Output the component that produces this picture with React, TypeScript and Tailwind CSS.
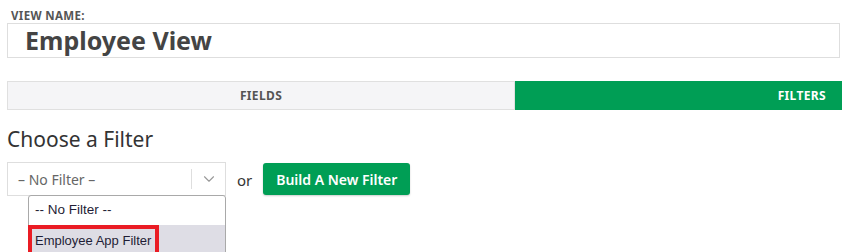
import { ChevronDown } from 'lucide-react';

export default function App() {
  return (
    <div className="w-[842px] h-[252px] overflow-hidden bg-white font-['Noto_Sans',sans-serif] text-[#333]">
      {/* View name */}
      <div className="pl-[11px] pt-[9px] text-[11.5px] font-bold uppercase leading-[14px] tracking-[0.03em] text-[#555]">
        View Name:
      </div>
      <div className="ml-[7px] mr-[2px] h-[35px] border border-[#dedede] pl-[17px] flex items-center">
        <span className="text-[25px] font-bold leading-none text-[#444]">Employee View</span>
      </div>

      {/* Tabs */}
      <div className="mt-[23px] ml-[7px] flex h-[29px]">
        <div className="w-[508px] flex items-center justify-center border border-[#e0e0e0] bg-[#f5f5f7] text-[12px] font-bold tracking-[0.03em] text-[#555]">
          FIELDS
        </div>
        <div className="flex-1 flex items-center justify-end pr-[16px] bg-[#009e55] text-[12px] font-bold tracking-[0.03em] text-white">
          FILTERS
        </div>
      </div>

      {/* Choose a filter */}
      <h2 className="mt-[16px] ml-[7px] text-[21px] font-normal leading-[26px] text-[#333]">Choose a Filter</h2>

      <div className="mt-[10px] ml-[7px] flex items-start">
        <div className="relative">
          <div className="w-[219px] h-[34px] border border-[#dedede] flex items-center">
            <span className="flex-1 pl-[10px] text-[14px] text-[#666]">– No Filter –</span>
            <span className="h-[20px] w-px bg-[#dedede]" />
            <span className="w-[33px] flex justify-center text-[#999]">
              <ChevronDown size={18} strokeWidth={1.5} />
            </span>
          </div>

          {/* Open native list */}
          <div className="absolute left-[21px] top-[33px] w-[198px] h-[60px] rounded-t-[3px] border border-[#a9a9a9] bg-white font-['Liberation_Sans',sans-serif] text-[13px] text-[#1f1d36] whitespace-nowrap">
            <div className="h-[29px] pl-[6px] flex items-center text-[13.5px]">-- No Filter --</div>
            <div className="h-[31px] bg-[#dedde5] flex">
              <div className="-ml-px w-[131px] h-[31px] border-[4px] border-[#ea1c24] pl-[3px] flex items-center">
                Employee App Filter
              </div>
            </div>
          </div>
        </div>

        <span className="ml-[11px] mt-[7px] text-[15px] text-[#333]">or</span>

        <button className="ml-[11px] mt-px h-[32px] w-[147px] rounded-[3px] bg-[#009e55] text-[14px] font-semibold text-white shadow-[0_1px_2px_rgba(0,0,0,0.2)]">
          Build A New Filter
        </button>
      </div>
    </div>
  );
}
